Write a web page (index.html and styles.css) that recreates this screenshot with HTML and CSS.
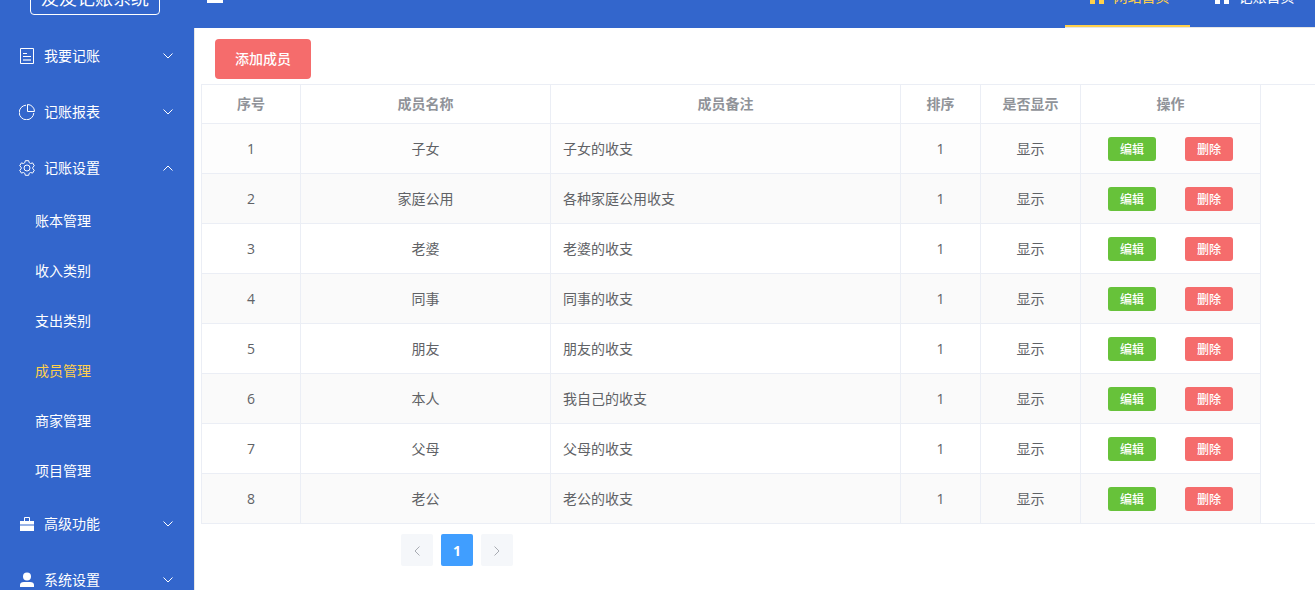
FILE: index.html
```
<!DOCTYPE html>
<html lang="zh-CN">
<head>
<meta charset="utf-8">
<title>成员管理</title>
<link rel="stylesheet" href="styles.css">
</head>
<body>
<header class="header">
    <div class="header-inner">
        <div class="logo"><span class="logo-text">友友记账系统</span></div>
        <button class="fold" aria-label="折叠菜单">
            <svg viewBox="0 0 16 17"><path d="M0 0h16v3H0zM0 7h16v3H0zM0 14h16v3H0z"/></svg>
        </button>
        <nav class="top-nav">
            <a href="#" class="top-link active">
                <svg class="icon" viewBox="0 0 14 14"><path d="M7 0l7 5v9H9V9H5v5H0V5z"/></svg>网站首页</a>
            <a href="#" class="top-link">
                <svg class="icon" viewBox="0 0 14 14"><path d="M7 0l7 5v9H9V9H5v5H0V5z"/></svg>记账首页</a>
        </nav>
    </div>
</header>

<div class="container">
    <aside class="sidebar">
        <a href="#" class="menu-title">
            <svg class="menu-icon" viewBox="0 0 16 16"><path class="line" d="M1.500 .5h13v15h-13zM4 5.500h4M4 8.500h8"/><path class="soft" d="M4 11h8v2H4z"/></svg>
            <span>我要记账</span>
            <svg class="arrow" viewBox="0 0 10 6"><path d="M.5 .5L5 5 9.500 .5"/></svg>
        </a>
        <a href="#" class="menu-title">
            <svg class="menu-icon" viewBox="0 0 16 16"><path class="line" d="M7 1.200A7.300 7.300 0 1 0 14.800 9M8.500 .5v7h7A7 7 0 0 0 8.500 .5z"/></svg>
            <span>记账报表</span>
            <svg class="arrow" viewBox="0 0 10 6"><path d="M.5 .5L5 5 9.500 .5"/></svg>
        </a>
        <a href="#" class="menu-title">
            <svg class="menu-icon" viewBox="0 0 16 16"><path class="line" d="M6.300 .7h3.400l.5 2 1.400.8 2-.6 1.700 2.900-1.500 1.400v1.600l1.500 1.400-1.700 2.900-2-.6-1.400.8-.5 2H6.300l-.5-2-1.400-.8-2 .6-1.700-2.900 1.500-1.400V7.200L.7 5.800l1.700-2.900 2 .6 1.400-.8z"/><circle class="line" cx="8" cy="8" r="3"/></svg>
            <span>记账设置</span>
            <svg class="arrow" viewBox="0 0 10 6"><path d="M.5 5.500L5 1l4.500 4.500"/></svg>
        </a>
        <ul class="submenu">
            <li><a href="#">账本管理</a></li>
            <li><a href="#">收入类别</a></li>
            <li><a href="#">支出类别</a></li>
            <li><a href="#" class="active">成员管理</a></li>
            <li><a href="#">商家管理</a></li>
            <li><a href="#">项目管理</a></li>
        </ul>
        <a href="#" class="menu-title">
            <svg class="menu-icon" viewBox="0 0 16 16"><path d="M1 5h14v3.500H1zM1 9.500h14V15H1z"/><path class="line" d="M5.500 5V1.500h5V5"/></svg>
            <span>高级功能</span>
            <svg class="arrow" viewBox="0 0 10 6"><path d="M.5 .5L5 5 9.500 .5"/></svg>
        </a>
        <a href="#" class="menu-title">
            <svg class="menu-icon" viewBox="0 0 16 16"><circle cx="8" cy="4.500" r="4"/><path d="M1 15v-2q0-3 4-3h6q4 0 4 3v2z"/></svg>
            <span>系统设置</span>
            <svg class="arrow" viewBox="0 0 10 6"><path d="M.5 .5L5 5 9.500 .5"/></svg>
        </a>
    </aside>

    <main class="main">
        <button class="btn btn-add">添加成员</button>
        <div class="table-wrap">
            <table class="table">
                <colgroup>
                    <col class="col-no"><col class="col-name"><col class="col-remark">
                    <col class="col-sort"><col class="col-show"><col class="col-action">
                </colgroup>
                <thead>
                    <tr><th>序号</th><th>成员名称</th><th>成员备注</th><th>排序</th><th>是否显示</th><th>操作</th></tr>
                </thead>
                <tbody>
                    <tr class="hover"><td>1</td><td>子女</td><td class="left">子女的收支</td><td>1</td><td>显示</td><td><div class="actions"><button class="btn btn-edit">编辑</button><button class="btn btn-del">删除</button></div></td></tr>
                    <tr><td>2</td><td>家庭公用</td><td class="left">各种家庭公用收支</td><td>1</td><td>显示</td><td><div class="actions"><button class="btn btn-edit">编辑</button><button class="btn btn-del">删除</button></div></td></tr>
                    <tr><td>3</td><td>老婆</td><td class="left">老婆的收支</td><td>1</td><td>显示</td><td><div class="actions"><button class="btn btn-edit">编辑</button><button class="btn btn-del">删除</button></div></td></tr>
                    <tr><td>4</td><td>同事</td><td class="left">同事的收支</td><td>1</td><td>显示</td><td><div class="actions"><button class="btn btn-edit">编辑</button><button class="btn btn-del">删除</button></div></td></tr>
                    <tr><td>5</td><td>朋友</td><td class="left">朋友的收支</td><td>1</td><td>显示</td><td><div class="actions"><button class="btn btn-edit">编辑</button><button class="btn btn-del">删除</button></div></td></tr>
                    <tr><td>6</td><td>本人</td><td class="left">我自己的收支</td><td>1</td><td>显示</td><td><div class="actions"><button class="btn btn-edit">编辑</button><button class="btn btn-del">删除</button></div></td></tr>
                    <tr><td>7</td><td>父母</td><td class="left">父母的收支</td><td>1</td><td>显示</td><td><div class="actions"><button class="btn btn-edit">编辑</button><button class="btn btn-del">删除</button></div></td></tr>
                    <tr><td>8</td><td>老公</td><td class="left">老公的收支</td><td>1</td><td>显示</td><td><div class="actions"><button class="btn btn-edit">编辑</button><button class="btn btn-del">删除</button></div></td></tr>
                </tbody>
            </table>
        </div>
        <div class="pagination">
            <button class="page" aria-label="上一页" disabled><svg viewBox="0 0 6 10"><path d="M5.500 .5L1 5l4.500 4.500"/></svg></button>
            <button class="page current">1</button>
            <button class="page" aria-label="下一页" disabled><svg viewBox="0 0 6 10"><path d="M.5 .5L5 5 .5 9.500"/></svg></button>
        </div>
    </main>
</div>
</body>
</html>
```

FILE: styles.css
```
* {
    box-sizing: border-box;
}

html, body {
    height: 100%;
}

body {
    margin: 0;
    display: flex;
    flex-direction: column;
    overflow: hidden;
    background: #fff;
    color: #606266;
    font-family: "Open Sans", "Noto Sans CJK SC", sans-serif;
    font-size: 14px;
    line-height: 20px;
}

a {
    color: #fff;
    text-decoration: none;
}

button {
    border: 0;
    padding: 0;
    font-family: inherit;
    cursor: pointer;
}

/* header: only its lower part stays in view */
.header {
    flex: none;
    height: 28px;
    display: flex;
    align-items: flex-end;
    overflow: hidden;
    background: #3366cc;
}

.header-inner {
    flex: 1;
    height: 61px;
    display: flex;
}

.logo {
    width: 190px;
    padding-top: 12px;
    text-align: center;
}

.logo-text {
    display: inline-block;
    width: 130px;
    height: 36px;
    border: 1px solid #fff;
    border-radius: 4px;
    color: #fff;
    font-size: 18px;
    line-height: 36px;
}

.fold {
    width: 50px;
    padding-bottom: 6px;
    background: none;
}

.fold svg {
    display: block;
    width: 16px;
    height: 17px;
    margin-left: 17px;
    fill: #fff;
}

.top-nav {
    margin-left: auto;
    display: flex;
    border-bottom: 1px solid #e6e6e6;
}

.top-link {
    width: 125px;
    height: 60px;
    padding: 2px 0 0 4px;
    display: flex;
    justify-content: center;
    align-items: center;
    gap: 10px;
    border-bottom: 2px solid transparent;
}

.top-link.active {
    color: #ffd04b;
    border-color: #ffd04b;
}

.icon {
    width: 14px;
    height: 14px;
    fill: currentColor;
}

.container {
    flex: 1;
    min-height: 0;
    display: flex;
}

/* side menu */
.sidebar {
    flex: none;
    width: 195px;
    overflow: hidden;
    background: #3366cc;
    border-right: 1px solid #e6e6e6;
}

.menu-title {
    height: 56px;
    padding: 0 21px 0 19px;
    display: flex;
    align-items: center;
    gap: 9px;
}

.menu-icon {
    width: 16px;
    height: 16px;
    fill: #fff;
}

.menu-icon .line {
    fill: none;
    stroke: #fff;
}

.menu-icon .soft {
    fill: #a9c0ea;
}

.arrow {
    width: 10px;
    height: 6px;
    margin-left: auto;
    fill: none;
    stroke: #fff;
}

.submenu {
    margin: 0;
    padding: 0;
    list-style: none;
}

.submenu a {
    display: block;
    padding-left: 35px;
    line-height: 50px;
}

.submenu .active {
    color: #ffd04b;
}

/* content */
.main {
    flex: 1;
    min-width: 0;
    padding: 11px 0 0 6px;
}

.btn {
    color: #fff;
    border-radius: 3px;
    font-size: 12px;
    font-weight: 500;
}

.btn-add {
    display: block;
    width: 96px;
    height: 40px;
    margin: 0 0 5px 14px;
    padding-bottom: 2px;
    border-radius: 4px;
    background: #f56c6c;
    font-size: 14px;
}

.table-wrap {
    border: 1px solid #ebeef5;
    border-right: 0;
    overflow: hidden;
}

.table {
    width: 1059px;
    table-layout: fixed;
    border-collapse: separate;
    border-spacing: 0;
}

.col-no { width: 99px; }
.col-name { width: 250px; }
.col-remark { width: 350px; }
.col-sort { width: 80px; }
.col-show { width: 100px; }
.col-action { width: 180px; }

.table th,
.table td {
    height: 50px;
    padding: 0 12px;
    text-align: center;
    border-right: 1px solid #ebeef5;
    border-bottom: 1px solid #ebeef5;
}

.table th {
    height: 39px;
    padding: 0;
    color: #909399;
}

.table tbody tr:nth-child(even) {
    background: #fafafa;
}

.table tbody tr.hover {
    background: #fdfdfd;
}

.table tbody tr:last-child td {
    height: 49px;
    border-bottom: 0;
}

.table .left {
    text-align: left;
}

.actions {
    display: flex;
    justify-content: center;
    gap: 29px;
}

.btn-edit,
.btn-del {
    width: 48px;
    height: 24px;
    background: #67c23a;
}

.btn-del {
    background: #f56c6c;
}

.pagination {
    display: flex;
    gap: 8px;
    padding: 10px 0 0 200px;
}

.page {
    width: 32px;
    height: 32px;
    border-radius: 2px;
    background: #f5f7fa;
    font-size: 14px;
    font-weight: 700;
}

.page svg {
    width: 6px;
    height: 10px;
    fill: none;
    stroke: #a8abb2;
}

.page.current {
    background: #409eff;
    color: #fff;
}
```
